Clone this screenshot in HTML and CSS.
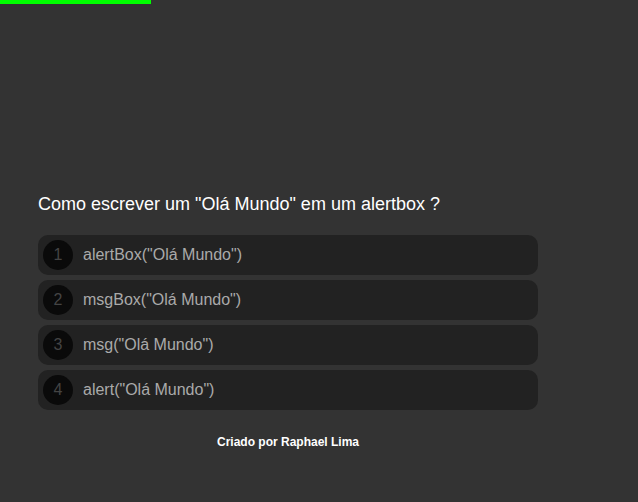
FILE: index.html
```html
<!DOCTYPE html>
<html lang="pt">
<head>
<meta charset="utf-8">
<link rel="stylesheet" href="styles.css">
</head>
<body>
<div class="progress"><div class="progress-fill"></div></div>
<main class="quiz">
  <h1 class="question">Como escrever um "Olá Mundo" em um alertbox ?</h1>
  <ul class="options">
    <li class="option"><span class="num">1</span><span class="label">alertBox("Olá Mundo")</span></li>
    <li class="option"><span class="num">2</span><span class="label">msgBox("Olá Mundo")</span></li>
    <li class="option"><span class="num">3</span><span class="label">msg("Olá Mundo")</span></li>
    <li class="option"><span class="num">4</span><span class="label">alert("Olá Mundo")</span></li>
  </ul>
  <footer class="credit">Criado por Raphael Lima</footer>
</main>
</body>
</html>
```
FILE: styles.css
```css
html, body {
  margin: 0;
  padding: 0;
  height: 100%;
}
body {
  background: #333333;
  font-family: "Liberation Sans", Arial, sans-serif;
  overflow: hidden;
}
.progress {
  height: 4px;
  width: 100%;
}
.progress-fill {
  height: 4px;
  width: 151px;
  background: #00ff00;
}
.quiz {
  width: 500px;
  margin: 0 0 0 38px;
  padding-top: 190px;
}
.question {
  margin: 0 0 20px 0;
  font-size: 18px;
  font-weight: normal;
  color: #ffffff;
  line-height: 21px;
}
.options {
  list-style: none;
  margin: 0;
  padding: 0;
  display: flex;
  flex-direction: column;
  gap: 5px;
}
.option {
  display: flex;
  align-items: center;
  height: 40px;
  padding: 0 5px;
  box-sizing: border-box;
  background: #222222;
  border-radius: 10px;
}
.num {
  width: 30px;
  height: 30px;
  border-radius: 50%;
  background: #0a0a0a;
  color: #444444;
  font-size: 16px;
  display: flex;
  align-items: center;
  justify-content: center;
  flex-shrink: 0;
}
.label {
  margin-left: 10px;
  color: #aaaaaa;
  font-size: 16px;
}
.credit {
  margin-top: 25px;
  text-align: center;
  color: #ffffff;
  font-size: 12px;
  font-weight: bold;
}
```
